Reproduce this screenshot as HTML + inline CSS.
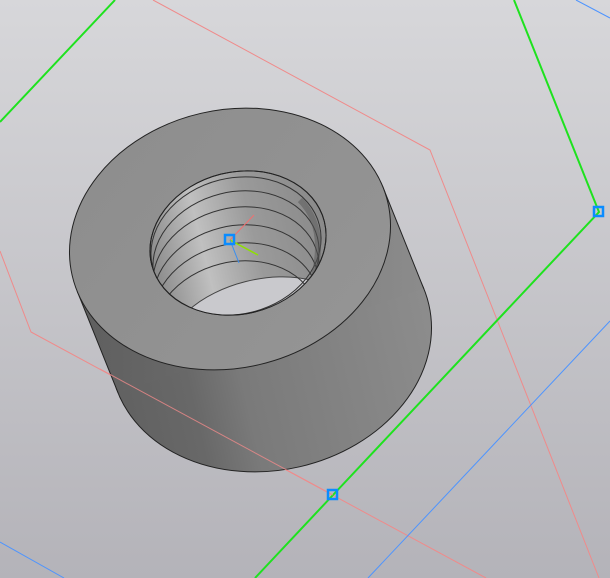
<!DOCTYPE html>
<html><head><meta charset="utf-8"><style>html,body{margin:0;padding:0;width:610px;height:578px;overflow:hidden}</style></head>
<body>
<svg width="610" height="578" viewBox="0 0 610 578" xmlns="http://www.w3.org/2000/svg">
<defs>
<linearGradient id="bg" x1="0" y1="0" x2="0" y2="1"><stop offset="0" stop-color="#d7d7da"/><stop offset="1" stop-color="#b4b3b9"/></linearGradient>
<linearGradient id="side" gradientUnits="userSpaceOnUse" x1="74" y1="0" x2="430" y2="0"><stop offset="0" stop-color="#5e5e5e"/><stop offset="0.3" stop-color="#686868"/><stop offset="0.45" stop-color="#7a7a7a"/><stop offset="1" stop-color="#8c8c8c"/></linearGradient>
<linearGradient id="top" x1="0" y1="0" x2="1" y2="1"><stop offset="0" stop-color="#8d8d8d"/><stop offset="1" stop-color="#959595"/></linearGradient>
<linearGradient id="hole" x1="0" y1="0" x2="1" y2="0"><stop offset="0" stop-color="#8a8a8a"/><stop offset="0.3" stop-color="#c0c0c0"/><stop offset="0.6" stop-color="#9a9a9a"/><stop offset="1" stop-color="#8a8a8a"/></linearGradient>
<clipPath id="hc"><ellipse cx="238" cy="243" rx="89" ry="71" transform="rotate(-14 238 243)"/></clipPath>
</defs>
<rect width="610" height="578" fill="url(#bg)"/>
<g fill="none">
<polyline points="153,0 430,150 599,578" stroke="#f08a8a" stroke-width="1"/>
<polyline points="0,251 31,332 486,578" stroke="#f08a8a" stroke-width="1"/>
<line x1="576" y1="0" x2="610" y2="18" stroke="#4d94ff" stroke-width="1"/>
<line x1="610" y1="321" x2="368" y2="578" stroke="#4d94ff" stroke-width="1"/>
<line x1="0" y1="542" x2="64" y2="578" stroke="#4d94ff" stroke-width="1"/>
<line x1="0" y1="122" x2="115" y2="0" stroke="#1ee21e" stroke-width="2"/>
<polyline points="514,0 599,212 333,495 255,578" stroke="#1ee21e" stroke-width="2"/>
</g>
<ellipse cx="271" cy="341" rx="162" ry="129" transform="rotate(-13 271 341)" fill="url(#side)" stroke="#222" stroke-width="1"/>
<polygon points="77.2,291.2 382.8,186.8 423.8,288.8 118.2,393.2" fill="url(#side)"/>
<line x1="77.2" y1="291.2" x2="118.2" y2="393.2" stroke="#222"/>
<line x1="382.8" y1="186.8" x2="423.8" y2="288.8" stroke="#222"/>
<ellipse cx="230" cy="239" rx="162" ry="129" transform="rotate(-13 230 239)" fill="url(#top)" stroke="#222" stroke-width="1"/>
<line x1="100" y1="369" x2="333" y2="495" stroke="#f08a8a" stroke-width="1" opacity="0.8"/>
<ellipse cx="238" cy="243" rx="89" ry="71" transform="rotate(-14 238 243)" fill="url(#hole)" stroke="#222"/>
<g clip-path="url(#hc)" fill="none" stroke="#333" stroke-width="1">
<ellipse cx="258" cy="330" rx="90" ry="50" transform="rotate(-14 258 330)" fill="#c9c9cd" stroke="#444"/>
<ellipse cx="236" cy="246" rx="86" ry="68" transform="rotate(-14 236 246)"/>
<ellipse cx="236" cy="258" rx="84" ry="66" transform="rotate(-14 236 258)"/>
<ellipse cx="236" cy="274" rx="84" ry="66" transform="rotate(-14 236 274)"/>
<ellipse cx="236" cy="292" rx="84" ry="66" transform="rotate(-14 236 292)"/>
<ellipse cx="236" cy="310" rx="84" ry="66" transform="rotate(-14 236 310)"/>
<ellipse cx="236" cy="328" rx="84" ry="66" transform="rotate(-14 236 328)"/>
<path d="M300,200 Q330,230 310,290" stroke="#555" stroke-width="6" opacity="0.5"/>
</g>
<ellipse cx="238" cy="243" rx="89" ry="71" transform="rotate(-14 238 243)" fill="none" stroke="#222"/>
<line x1="230" y1="240" x2="254" y2="215" stroke="#f07070" stroke-width="1"/>
<line x1="230" y1="240" x2="258" y2="255" stroke="#8ee000" stroke-width="1.5"/>
<line x1="230" y1="240" x2="239" y2="263" stroke="#3a8ef0" stroke-width="1"/>
<g fill="none" stroke="#0a8cff" stroke-width="2.5">
<rect x="225" y="235" width="9" height="9"/>
<rect x="594" y="207" width="9" height="9"/>
<rect x="328" y="490" width="9" height="9"/>
</g>
</svg>
</body></html>
